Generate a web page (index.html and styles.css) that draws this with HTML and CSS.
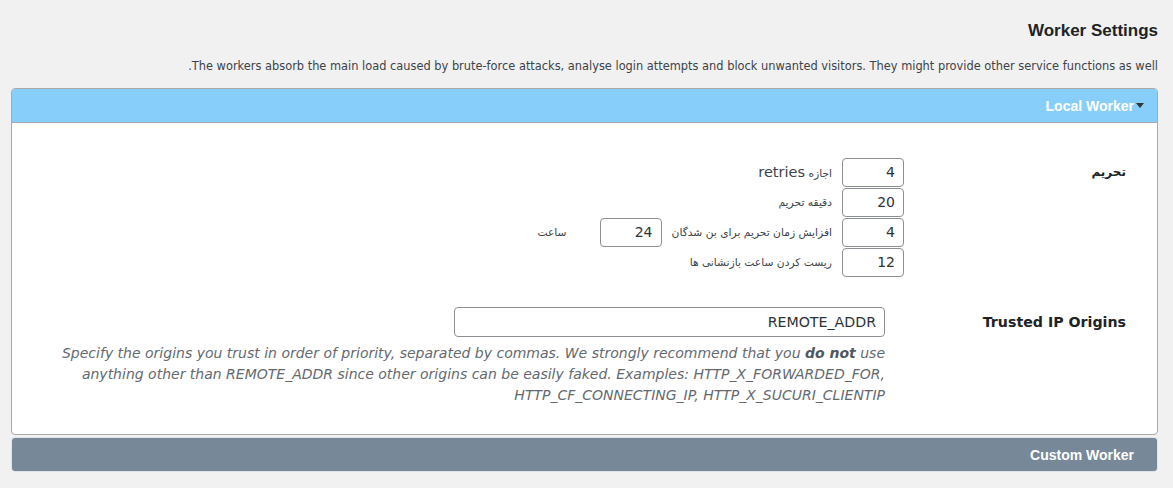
FILE: index.html
```html
<!DOCTYPE html>
<html lang="fa" dir="rtl">
<head>
<meta charset="utf-8">
<title>Worker Settings</title>
<link rel="stylesheet" href="styles.css">
</head>
<body>
<div class="wrap">
  <h1 class="page-title">Worker Settings</h1>
  <p class="intro">The workers absorb the main load caused by brute-force attacks, analyse login attempts and block unwanted visitors. They might provide other service functions as well.</p>

  <section class="panel">
    <div class="panel-head head-local">
      <span class="head-title">Local Worker</span>
      <span class="caret"></span>
    </div>
    <div class="panel-body">
      <div class="form-row">
        <div class="row-label">تحریم</div>
        <div class="row-field">
          <div class="line"><input class="num" type="text" value="4"><span class="txt"><span dir="rtl">اجازه <span class="en">retries</span></span></span></div>
          <div class="line"><input class="num" type="text" value="20"><span class="txt">دقیقه تحریم</span></div>
          <div class="line"><input class="num" type="text" value="4"><span class="txt">افزایش زمان تحریم برای بن شدگان</span><input class="num" type="text" value="24"><span class="txt txt-unit">ساعت</span></div>
          <div class="line"><input class="num" type="text" value="12"><span class="txt">ریست کردن ساعت بازنشانی ها</span></div>
        </div>
      </div>
      <div class="form-row trusted">
        <div class="row-label en-label">Trusted IP Origins</div>
        <div class="row-field field-trusted">
          <input class="wide" type="text" value="REMOTE_ADDR" dir="ltr">
          <p class="desc" dir="ltr">Specify the origins you trust in order of priority, separated by commas. We strongly recommend that you <b>do not</b> use anything other than REMOTE_ADDR since other origins can be easily faked. Examples: HTTP_X_FORWARDED_FOR, HTTP_CF_CONNECTING_IP, HTTP_X_SUCURI_CLIENTIP</p>
        </div>
      </div>
    </div>
  </section>

  <section class="panel collapsed">
    <div class="panel-head head-custom">
      <span class="head-title">Custom Worker</span>
    </div>
  </section>
</div>
</body>
</html>
```

FILE: styles.css
```css
html, body {
  margin: 0;
  padding: 0;
  background: #f1f1f1;
}
body {
  font-family: "DejaVu Sans", Verdana, sans-serif;
  color: #333;
}
.wrap {
  padding: 0 15px 0 11px;
}
.page-title {
  margin: 0;
  padding-top: 21px;
  font-family: "Liberation Sans", Arial, sans-serif;
  font-size: 17px;
  line-height: 20px;
  font-weight: bold;
  color: #1d2327;
}
.intro {
  margin: 0;
  padding-top: 17px;
  height: 30px;
  font-size: 11.4px;
  line-height: 16px;
  color: #3c434a;
}
.panel {
  background: #fff;
  border: 1px solid #a9a9a9;
  border-radius: 4px;
  overflow: hidden;
}
.panel.collapsed {
  margin-top: 2px;
  border-color: #e0e4e8;
}
.panel-head {
  height: 33px;
  display: flex;
  align-items: center;
  padding-right: 13px;
  font-family: "Liberation Sans", Arial, sans-serif;
  font-weight: bold;
  font-size: 14px;
  color: #fff;
}
.head-local {
  background: #87cefa;
  border-bottom: 1px solid #a9a9a9;
}
.head-custom {
  background: #778899;
  padding-right: 23px;
}
.caret {
  width: 0;
  height: 0;
  border-left: 4px solid transparent;
  border-right: 4px solid transparent;
  border-top: 5px solid #333;
  order: -1;
  margin-left: 2px;
  margin-top: 0;
}
.panel-body {
  padding: 34px 31px 28px 40px;
}
.form-row {
  display: flex;
  gap: 22px;
}
.form-row.trusted {
  margin-top: 30px;
}
.row-label {
  width: 200px;
  flex: none;
  height: 30px;
  line-height: 30px;
  font-size: 12px;
  font-weight: bold;
  color: #1d2327;
}
.en-label {
  font-size: 14.2px;
}
.row-field {
  flex: 1;
  min-width: 0;
}
.line {
  display: flex;
  align-items: center;
  height: 30px;
}
.num {
  width: 62px;
  height: 29px;
  box-sizing: border-box;
  border: 1px solid #8c8f94;
  border-radius: 4px;
  padding: 0 8px;
  font-family: "DejaVu Sans", Verdana, sans-serif;
  font-size: 14px;
  color: #2c3338;
  text-align: right;
  direction: ltr;
  background: #fff;
}
.txt {
  font-size: 10.7px;
  color: #3c434a;
  margin: 0 10px;
}
.txt-unit {
  margin-right: 33px;
}
.en {
  font-size: 14.5px;
}
.field-trusted {
  padding-right: 19px;
}
.wide {
  display: block;
  width: 431px;
  height: 30px;
  box-sizing: border-box;
  border: 1px solid #8c8f94;
  border-radius: 4px;
  padding: 0 8px;
  font-family: "DejaVu Sans", Verdana, sans-serif;
  font-size: 14.2px;
  color: #2c3338;
  text-align: right;
  background: #fff;
}
.desc {
  margin: 6px 0 0;
  font-size: 14px;
  line-height: 21px;
  font-style: italic;
  color: #646970;
  text-align: right;
}
.desc b {
  color: #50575e;
}
```
